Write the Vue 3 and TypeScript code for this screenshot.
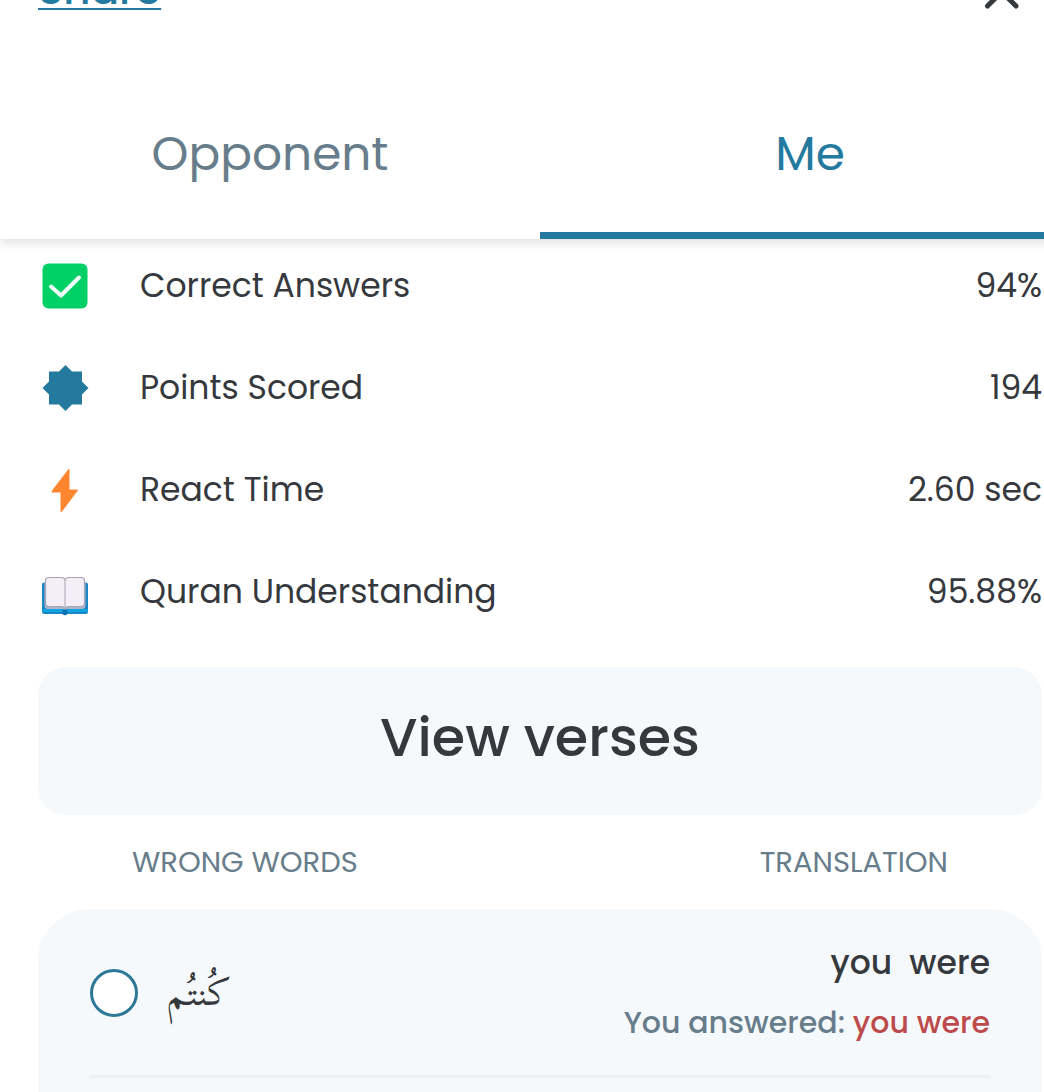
<script setup lang="ts">
import { ref } from 'vue'

type IconName = 'check' | 'star' | 'bolt' | 'book'

interface Stat {
  icon: IconName
  label: string
  value: string
}

interface WrongWord {
  id: string
  arabic: string
  translation: string
  answer: string
}

const tabs: string[] = ['Opponent', 'Me']
const activeTab = ref<string>('Me')

const stats: Stat[] = [
  { icon: 'check', label: 'Correct Answers', value: '94%' },
  { icon: 'star', label: 'Points Scored', value: '194' },
  { icon: 'bolt', label: 'React Time', value: '2.60 sec' },
  { icon: 'book', label: 'Quran Understanding', value: '95.88%' },
]

const wrongWords: WrongWord[] = [
  { id: 'word-1', arabic: 'كُنتُم', translation: 'you  were', answer: 'you were' },
]
</script>

<template>
  <div class="screen">
    <div class="page">
      <header class="topbar">
        <a class="share" href="#">Share</a>
        <button class="close" type="button" aria-label="Close">
          <svg viewBox="0 0 36 40" width="36" height="40" aria-hidden="true">
            <path d="M3.500 7.500 32 36M32 7.500 3.500 36" fill="none" stroke="#35393d" stroke-width="5" stroke-linecap="round" />
          </svg>
        </button>
      </header>

      <nav class="tabs" role="tablist">
        <button
          v-for="tab in tabs"
          :key="tab"
          type="button"
          role="tab"
          class="tab"
          :class="{ active: tab === activeTab }"
          :aria-selected="tab === activeTab"
          @click="activeTab = tab"
        >
          {{ tab }}
        </button>
      </nav>

      <main class="content">
        <dl class="stats">
          <div v-for="stat in stats" :key="stat.label" class="stat">
            <dt class="stat-label">
              <svg class="icon" viewBox="0 0 48 48" width="48" height="48" aria-hidden="true">
                <template v-if="stat.icon === 'check'">
                  <rect x="1.500" y="1.500" width="45" height="45" rx="6" fill="#00d166" />
                  <path d="M10 24.500 20 33.500 38 15.500" fill="none" stroke="#f2fff7" stroke-width="4" stroke-linecap="round" stroke-linejoin="round" />
                </template>
                <path
                  v-else-if="stat.icon === 'star'"
                  d="M24.500 1 31 7.500H41V17.500L47.500 24 41 30.500V40.500H31L24.500 47 18 40.500H8V30.500L1.500 24 8 17.500V7.500H18Z"
                  fill="#247a9e"
                />
                <path
                  v-else-if="stat.icon === 'bolt'"
                  d="M27.500 3Q28.500 2 28.500 4V23.500H36Q37.500 23.500 36.500 25L21 45.500Q19.500 47 19.500 45V26.500H11.500Q10 26.500 11 24.500Z"
                  fill="#ff862f"
                />
                <template v-else>
                  <path d="M3 14.500H45Q47 14.500 47 16.500V43.500Q47 46 44.500 46H3.500Q1 46 1 43.500V16.500Q1 14.500 3 14.500Z" fill="#1b86c4" />
                  <path d="M1.500 42.500H46.500" stroke="#12a4e2" stroke-width="3" />
                  <path d="M3.500 14V37.500Q3.500 41 7 41H21L24 42 27 41H41Q44.500 41 44.500 37.500V14Z" fill="#a9b6cc" />
                  <path d="M4.500 12.500Q4.500 9.500 7.500 9.500H20.500Q23 9.500 24 11.500Q25 9.500 27.500 9.500H40.500Q43.500 9.500 43.500 12.500V35.500Q43.500 38.500 40.500 38.500H28Q25 38.500 24 40.500Q23 38.500 20 38.500H7.500Q4.500 38.500 4.500 35.500Z" fill="#f3eef8" stroke="#aaa2b2" stroke-width="1.200" />
                  <path d="M24 11.500V40" stroke="#b8b1c0" stroke-width="1.200" />
                  <path d="M21.500 41.500H26.500V46Q24 48.500 21.500 46Z" fill="#0874b3" />
                </template>
              </svg>
              {{ stat.label }}
            </dt>
            <dd class="stat-value">{{ stat.value }}</dd>
          </div>
        </dl>

        <button class="verses" type="button">View verses</button>

        <div class="columns">
          <span>WRONG WORDS</span>
          <span>TRANSLATION</span>
        </div>

        <ul class="words">
          <li v-for="word in wrongWords" :key="word.id" class="word">
            <input :id="word.id" class="pick" type="checkbox" />
            <label class="arabic" :for="word.id" lang="ar" dir="rtl">{{ word.arabic }}</label>
            <div class="meaning">
              <p class="translation">{{ word.translation }}</p>
              <p class="answered">You answered: <span class="wrong">{{ word.answer }}</span></p>
            </div>
          </li>
        </ul>
      </main>
    </div>
  </div>
</template>

<style>
body {
  margin: 0;
  background: #fff;
}
</style>

<style scoped>
.screen {
  overflow: hidden;
  font-family: Poppins, Inter, sans-serif;
  color: #35393d;
}

.page {
  display: flex;
  flex-direction: column;
  width: calc(100% + 36px);
  min-height: 100vh;
}

button {
  padding: 0;
  border: 0;
  background: none;
  font: inherit;
  color: inherit;
  cursor: pointer;
}

/* The top bar is scrolled most of the way out of view. */
.topbar {
  display: flex;
  justify-content: space-between;
  align-items: center;
  height: 60px;
  margin-top: -40px;
  padding: 0 60px 0 38px;
}

.share {
  font-size: 42px;
  line-height: 60px;
  font-weight: 500;
  color: #247a9e;
  text-decoration-thickness: 2px;
  text-underline-offset: 4px;
}

.close,
.close svg {
  display: block;
}

.tabs {
  display: flex;
  margin-top: 49px;
  box-shadow: 0 2px 12px rgba(0, 0, 0, 0.16);
  clip-path: inset(0 0 -20px 0);
}

.tab {
  flex: 1;
  height: 170px;
  padding-top: 6px;
  border-bottom: 7px solid transparent;
  font-size: 47px;
  color: #687d8b;
}

.tab.active {
  border-bottom-color: #247a9e;
  color: #247a9e;
}

.content {
  display: flex;
  flex: 1;
  flex-direction: column;
  padding: 0 38px;
}

.stats {
  display: flex;
  flex-direction: column;
  gap: 54px;
  margin: 0;
  padding: 23px 0 51px;
}

.stat {
  display: flex;
  justify-content: space-between;
  font-size: 33px;
  line-height: 48px;
}

.stat-label {
  display: flex;
  align-items: center;
  gap: 51px;
  padding-left: 3px;
}

.stat-value {
  margin: 0;
}

.verses {
  height: 148px;
  padding-bottom: 8px;
  border-radius: 28px;
  background: #f5f9fc;
  font-size: 54px;
  font-weight: 500;
}

.columns {
  display: flex;
  justify-content: space-between;
  padding: 26px 94px;
  font-size: 29px;
  line-height: 42px;
  color: #687d8b;
}

.words {
  flex: 1;
  margin: 0;
  padding: 0 52px;
  border-radius: 52px 52px 0 0;
  background: #f5f9fc;
  list-style: none;
}

.word {
  display: flex;
  align-items: center;
  padding: 24px 0 22px;
  border-bottom: 3px solid #ecf1f4;
}

.pick {
  flex: none;
  width: 48px;
  height: 48px;
  margin: 0;
  border: 3px solid #2c7896;
  border-radius: 50%;
  background: #fff;
  appearance: none;
}

.pick:checked {
  background: #247a9e;
}

.arabic {
  margin-left: 29px;
  font-family: "Scheherazade New", Scheherazade, "Amiri Quran", Amiri, "Noto Naskh Arabic", "DejaVu Sans", sans-serif;
  font-size: 38px;
  line-height: 60px;
}

.meaning {
  margin-left: auto;
  font-weight: 500;
  line-height: 60px;
  text-align: right;
}

.meaning p {
  margin: 0;
}

.translation {
  font-size: 33px;
  white-space: pre;
}

.answered {
  font-size: 30px;
  color: #687d8b;
}

.wrong {
  color: #bd4b4b;
}
</style>
